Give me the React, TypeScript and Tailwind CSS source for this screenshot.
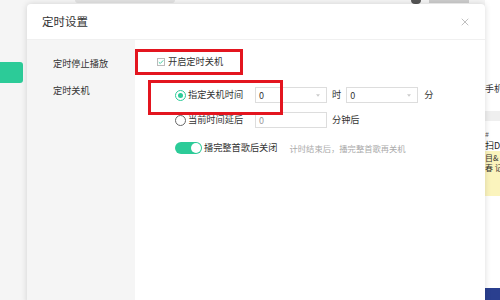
import { X } from 'lucide-react';

const FONT = { fontFamily: '"Noto Sans CJK SC", "Noto Sans", sans-serif' };

export default function App() {
  return (
    <div className="relative w-[500px] h-[300px] overflow-hidden bg-[#f5f5f5] text-[#333]" style={FONT}>
      {/* page behind the dialog */}
      <div className="flex h-full">
        <div className="w-[27px] pt-[62px]">
          <div className="h-[21px] w-[23px] rounded-r-[3px] bg-[#2ccb98]" />
        </div>
        <div className="flex-1 flex items-start pt-0">
          <div className="ml-[48px] h-[3px] w-[100px] rounded-b bg-[#e2e2e2]" />
          <div className="flex-1" />
          <div className="h-[4px] w-[10px] rounded-b-full bg-[#555]" />
          <div className="ml-[8px] mr-[16px] h-[3px] w-[40px] bg-[#ccc]" />
        </div>
        <div className="w-[15px] bg-white flex flex-col text-[9px] leading-none overflow-hidden whitespace-nowrap">
          <div className="h-[84px]" />
          <div className="text-[#333]">手机</div>
          <div className="h-[18px]" />
          <div className="h-[10px] bg-[#efefef]" />
          <div className="h-[10px]" />
          <div className="text-[7px] text-[#555]">#</div>
          <div className="mt-[3px] text-[#222]">扫D</div>
          <div className="mt-[1px] h-[45px] bg-[#fbf4bd] pt-[2px] text-[8px] leading-[9px] text-[#333]">
            <div>目&amp;</div>
            <div className="mt-[1px]">春 记</div>
          </div>
          <div className="flex-1" />
          <div className="h-[12px] bg-[#2a3f8f]" />
        </div>
      </div>

      {/* dialog */}
      <div className="absolute left-[27px] top-[4px] w-[458px] h-[300px] rounded-t-[4px] bg-white shadow-[0_0_6px_rgba(0,0,0,0.15)] flex flex-col">
        <div className="h-[36px] flex items-center justify-between pl-[15px] pr-[14px] border-b border-[#f0f0f0]">
          <span className="text-[11.5px] text-[#333]">定时设置</span>
          <X className="w-[12px] h-[12px] text-[#aaa]" strokeWidth={1.5} />
        </div>
        <div className="flex flex-1">
          <div className="w-[108px] bg-[#f5f5f5] pl-[26px] pt-[17px] text-[9.2px] text-[#333] flex flex-col gap-[14px] leading-[13px]">
            <span>定时停止播放</span>
            <span>定时关机</span>
          </div>
          <div className="relative flex-1 pt-[9px] text-[9.2px] leading-none">
            <div className="h-[26px] flex items-center pl-[22px] gap-[3px]">
              <span className="w-[8px] h-[8px] border border-[#bbb] flex items-center justify-center">
                <svg viewBox="0 0 8 8" className="w-[6px] h-[6px]">
                  <path d="M1 4.2 L3 6 L7 1.8" fill="none" stroke="#2ccb98" strokeWidth="1.2" />
                </svg>
              </span>
              <span>开启定时关机</span>
            </div>
            <div className="pl-[40px] mt-[8px] flex flex-col">
              <div className="h-[24px] flex items-center">
                <Radio checked />
                <span className="ml-[2px] w-[67px]">指定关机时间</span>
                <Select />
                <span className="mx-[5px]">时</span>
                <Select />
                <span className="ml-[6px]">分</span>
              </div>
              <div className="h-[26px] flex items-center">
                <Radio />
                <span className="ml-[2px] w-[67px]">当前时间延后</span>
                <div className="w-[72px] h-[16px] border border-[#ddd] flex items-center pl-[3px] text-[#999] text-[9px]">0</div>
                <span className="ml-[5px]">分钟后</span>
              </div>
              <div className="mt-[2px] h-[26px] flex items-center">
                <div className="w-[27px] h-[12px] rounded-full bg-[#2ccb98] flex items-center justify-end pr-[1px]">
                  <div className="w-[10px] h-[10px] rounded-full bg-white" />
                </div>
                <span className="ml-[2px]">播完整首歌后关闭</span>
                <span className="ml-[12px] text-[8.3px] text-[#aaa]">计时结束后，播完整首歌再关机</span>
              </div>
            </div>

            {/* red annotation boxes */}
            <div className="absolute left-0 top-[9px] w-[108px] h-[26px] border-[3px] border-[#e3151f]" />
            <div className="absolute left-[13px] top-[40px] w-[135px] h-[35px] border-[3px] border-[#e3151f]" />
          </div>
        </div>
      </div>
    </div>
  );
}

function Radio({ checked }: { checked?: boolean }) {
  return (
    <span
      className={
        'w-[11px] h-[11px] rounded-full border flex items-center justify-center ' +
        (checked ? 'border-[#2ccb98]' : 'border-[#666]')
      }
    >
      {checked && <span className="w-[5px] h-[5px] rounded-full bg-[#2ccb98]" />}
    </span>
  );
}

function Select() {
  return (
    <div className="w-[72px] h-[16px] border border-[#ddd] flex items-center justify-between pl-[3px] pr-[6px] text-[9px] text-[#333]">
      <span>0</span>
      <svg viewBox="0 0 6 4" className="w-[4px] h-[3px]">
        <path d="M0 0 L6 0 L3 4 Z" fill="#ccc" />
      </svg>
    </div>
  );
}
